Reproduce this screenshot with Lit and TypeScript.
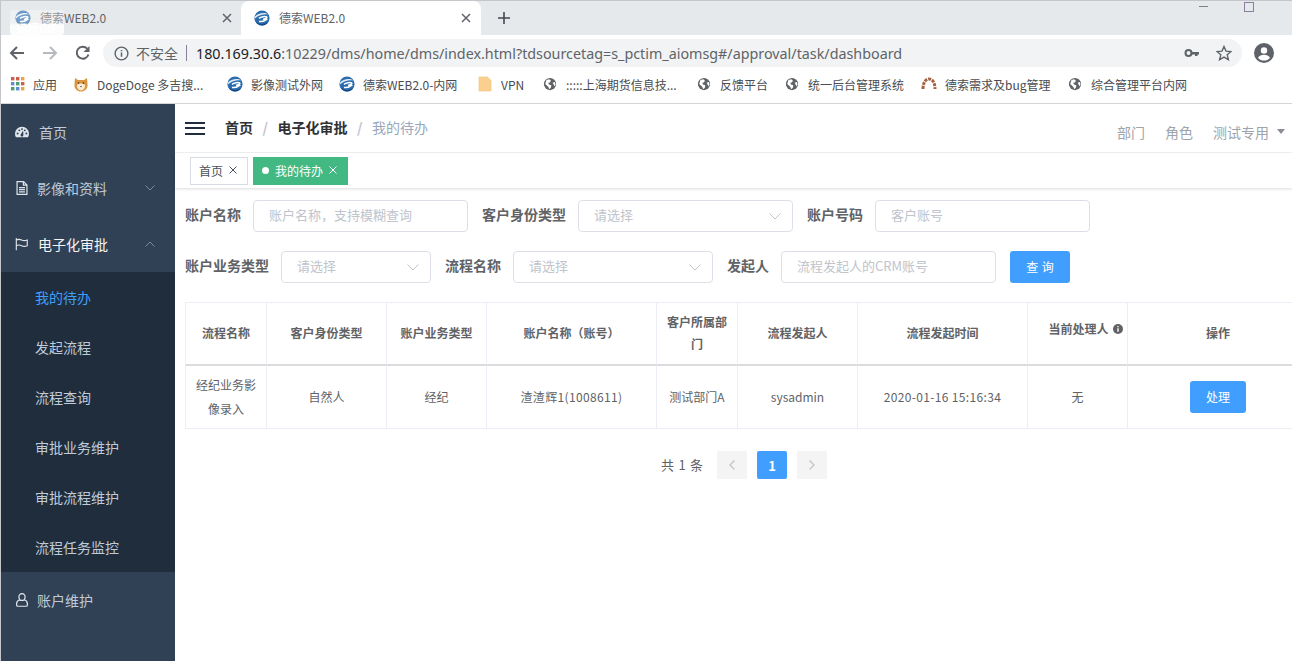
import { LitElement, html, css, svg } from "lit";
import { customElement } from "lit/decorators.js";

const favicon = html`<svg class="fav" viewBox="0 0 16 16">
  <circle cx="8" cy="8" r="7.6" fill="#2a6cae"></circle>
  <path d="M1 6.500C4 3 11 1.600 15 4.600 11 3.600 5 4.600 1 8.500z" fill="#dfeaf4"></path>
  <path d="M5 8.400c2-1.600 6-2.400 7.600-1.600.9.800-.6 2-3.600 2.600M5 11.400c2.400.4 6-.4 8.400-2.400" fill="none" stroke="#fff" stroke-width="1.500"></path>
  <path d="M1.400 11c3 3.600 9.600 4 13 .6-1 2.600-3.600 4-6.400 4-2.800 0-5.400-1.800-6.600-4.600z" fill="#124a85"></path>
</svg>`;

const globe = html`<svg class="fav small" viewBox="0 0 16 16">
  <circle cx="8" cy="8" r="7" fill="#5f6368"></circle>
  <path d="M4 3.500l3-.8 2 1.300-1 2.200-2 .3.800 2.200 2.700.8-.4 2.500-1.800 2-1.400-2.800-1.500-1.500-1.900-1.800zM11 6.500l2.600-.8.800 2.800-1.300 2.200-1-2z" fill="#fff"></path>
</svg>`;

const dog = html`<svg class="fav" viewBox="0 0 16 16">
  <path d="M2 2l3 2h6l3-2 .6 7c0 4-3 6.500-6.600 6.500S1.400 13 1.400 9z" fill="#d9963f"></path>
  <path d="M4 9c1-1 2.500-1.400 4-1.400s3 .4 4 1.400c.4 3-1.600 5.400-4 5.400S3.600 12 4 9z" fill="#f8ead4"></path>
  <circle cx="5.600" cy="7" r=".8" fill="#40281a"></circle>
  <circle cx="10.400" cy="7" r=".8" fill="#40281a"></circle>
  <path d="M7 10h2l-1 1.200z" fill="#40281a"></path>
</svg>`;

const apps = html`<svg class="fav apps" viewBox="0 0 14 14">
  ${[
    ["#c9604f", 0, 0], ["#c9604f", 5, 0], ["#e0a84a", 10, 0],
    ["#5f8fd0", 0, 5], ["#4e9f70", 5, 5], ["#c9604f", 10, 5],
    ["#4e9f70", 0, 10], ["#5f8fd0", 5, 10], ["#e0a84a", 10, 10],
  ].map(([c, x, y]) => svg`<rect x=${x} y=${y} width="3.400" height="3.400" fill=${c}></rect>`)}
</svg>`;

const folder = html`<svg class="fav" viewBox="0 0 16 16">
  <path d="M2 1h8.500L14 4.500V15H2z" fill="#fbd08e" stroke="#eec07a" stroke-width=".6"></path>
</svg>`;

const arc = html`<svg class="fav" viewBox="0 0 16 16">
  <path d="M2 13C2 6 5 3 8 3s6 3 6 10" fill="none" stroke="#a5623f" stroke-width="3" stroke-dasharray="3 1"></path>
</svg>`;

const bookmarks = [
  { icon: apps, text: "应用", w: 23 },
  { icon: dog, text: "DogeDoge 多吉搜...", w: 113 },
  { icon: favicon, text: "影像测试外网", w: 71 },
  { icon: favicon, text: "德索WEB2.0-内网", w: 97 },
  { icon: folder, text: "VPN", w: 24 },
  { icon: globe, text: ":::::上海期货信息技...", w: 113 },
  { icon: globe, text: "反馈平台", w: 47 },
  { icon: globe, text: "统一后台管理系统", w: 96 },
  { icon: arc, text: "德索需求及bug管理", w: 105 },
  { icon: globe, text: "综合管理平台内网", w: 96 },
];

const chevronDown = html`<svg class="chev" viewBox="0 0 10 6"><path d="M.5.500L5 5 9.500.5" fill="none" stroke="currentColor"></path></svg>`;
const chevronUp = html`<svg class="chev" viewBox="0 0 10 6"><path d="M.5 5.500L5 1l4.500 4.500" fill="none" stroke="currentColor"></path></svg>`;
const selectArrow = html`<svg class="arrow" viewBox="0 0 12 7"><path d="M.5.500L6 6 11.500.5" fill="none" stroke="#c0c4cc"></path></svg>`;

const dashIcon = html`<svg class="mi" viewBox="0 0 16 14"><path fill-rule="evenodd" d="M8 1a8 8 0 0 0-8 8c0 1.500.4 2.900 1.100 4h13.800A8 8 0 0 0 16 9a8 8 0 0 0-8-8zM3 9.800a1.100 1.100 0 1 1 0-2.200 1.100 1.100 0 0 1 0 2.200zm2-3.600a1.100 1.100 0 1 1 0-2.200 1.100 1.100 0 0 1 0 2.200zM8 4.800a1.100 1.100 0 1 1 0-2.200 1.100 1.100 0 0 1 0 2.200zm1.300 6.700a1.600 1.600 0 0 1-2.900-1.200c.2-.4 2.300-3.900 2.800-4.700.3.900 .5 5.100.1 5.900zM13 9.800a1.100 1.100 0 1 1 0-2.200 1.100 1.100 0 0 1 0 2.200zm-1.800-3.600a1.100 1.100 0 1 1 0-2.200 1.100 1.100 0 0 1 0 2.200z" fill="currentColor"></path></svg>`;
const fileIcon = html`<svg class="mi" viewBox="0 0 12 15"><path d="M.7.700h7l3.600 3.600v10h-10.600zM7.500.7v3.800h3.800M2.800 7h6.400M2.800 9.300h6.400M2.800 11.600h6.400" fill="none" stroke="currentColor" stroke-width="1.300"></path></svg>`;
const flagIcon = html`<svg class="mi" viewBox="0 0 16 14"><path d="M1.500 0v14M1.500 2.500c2-1.200 4-1 6 0s4 1 6.500 0v6.500c-2.500 1-4.500 1-6.500 0s-4-1.200-6 0" fill="none" stroke="currentColor" stroke-width="1.300"></path></svg>`;
const userIcon = html`<svg class="mi" viewBox="0 0 13 15"><path d="M6.500.7a3.300 3.300 0 0 1 3.300 3.500c0 2-1.300 3.800-3.300 3.800S3.200 6.200 3.200 4.200A3.300 3.300 0 0 1 6.500.7zM4 7.500c-2 .5-3.300 1.600-3.300 4v1.300c0 .8.500 1.400 1.300 1.400h9c.8 0 1.300-.6 1.300-1.400v-1.300c0-2.400-1.300-3.500-3.300-4" fill="none" stroke="currentColor" stroke-width="1.300"></path></svg>`;

const subMenu = ["我的待办", "发起流程", "流程查询", "审批业务维护", "审批流程维护", "流程任务监控"];

const columns = ["流程名称", "客户身份类型", "账户业务类型", "账户名称（账号）", "客户所属部门", "流程发起人", "流程发起时间", "当前处理人", "操作"];
const row = ["经纪业务影像录入", "自然人", "经纪", "渣渣辉1(1008611)", "测试部门A", "sysadmin", "2020-01-16 15:16:34", "无"];

@customElement("app-root")
export class AppRoot extends LitElement {
  static styles = css`
    * {
      box-sizing: border-box;
    }
    :host {
      display: flex;
      flex-direction: column;
      height: 661px;
      width: 1292px;
      position: relative;
      overflow: hidden;
      background: #fff;
      border: 1px solid #c4c6c9;
      font-family: "Noto Sans CJK SC", "Noto Sans", sans-serif;
    }
    .fav {
      width: 16px;
      height: 16px;
      flex: none;
    }
    .fav.small {
      width: 14px;
      height: 14px;
      margin: 0 1px;
    }
    .fav.apps {
      width: 14px;
      height: 14px;
    }

    /* browser chrome */
    .tabs {
      height: 34px;
      flex: none;
      background: #e6e9ec;
      display: flex;
      position: relative;
    }
    .tab {
      width: 240px;
      display: flex;
      align-items: center;
      padding: 0 8px 1px 14px;
      gap: 9px;
      font-size: 12px;
      color: #5f6368;
      height: 34px;
    }
    .tab.on {
      width: 240px;
      padding-left: 13px;
      background: #fff;
      border-radius: 8px 8px 0 0;
    }
    .tab .txt {
      flex: 1;
    }
    .tab .x {
      width: 10px;
      height: 10px;
      margin-right: 1px;
    }
    .tab.on .x {
      margin-right: 2px;
    }
    .plus {
      width: 12px;
      height: 12px;
      margin: 11px 0 0 17px;
    }
    .win {
      position: absolute;
      top: 5px;
      left: 1198px;
      width: 9px;
      height: 1px;
      background: #7d8084;
    }
    .win.max {
      top: 1px;
      left: 1243px;
      width: 10px;
      height: 10px;
      background: none;
      border: 1px solid #8b7f9c;
    }
    .gif {
      position: absolute;
      left: 9px;
      top: 9px;
      width: 54px;
      height: 25px;
      background: linear-gradient(rgba(255, 255, 255, 0.3), rgba(255, 255, 255, 0.35) 50%, rgba(255, 255, 255, 0.85) 62%);
      border-radius: 3px;
      color: #fff;
      font-size: 11px;
      font-weight: 700;
      text-align: center;
      padding-top: 11px;
      line-height: 15px;
    }

    .toolbar {
      height: 36px;
      flex: none;
      display: flex;
      align-items: center;
      background: #fff;
    }
    .nav {
      width: 16px;
      height: 16px;
      flex: none;
      margin-left: 8px;
    }
    .nav + .nav {
      margin-left: 17px;
    }
    .omni {
      margin-left: 12px;
      width: 1139px;
      height: 28px;
      border-radius: 14px;
      background: #f1f3f4;
      display: flex;
      align-items: center;
      padding-left: 11px;
      font-size: 14px;
      color: #5f6368;
    }
    .omni .info {
      width: 15px;
      height: 15px;
      flex: none;
    }
    .omni .warn {
      margin-left: 7px;
    }
    .omni .sep {
      width: 1px;
      height: 16px;
      background: #8a7f96;
      margin: 0 9px 0 8px;
      flex: none;
    }
    .omni .url {
      flex: 1;
      font-family: "Noto Sans", sans-serif;
      font-size: 14.32px;
      white-space: nowrap;
    }
    .omni .url b {
      font-weight: 400;
      color: #202124;
    }
    .omni .end {
      width: 16px;
      height: 16px;
      flex: none;
      margin-right: 10px;
      margin-left: 6px;
    }
    .avatar {
      width: 20px;
      height: 20px;
      flex: none;
      margin-left: 12px;
    }

    .bookmarks {
      height: 33px;
      flex: none;
      display: flex;
      align-items: center;
      gap: 17px;
      padding: 0 0 6px 10px;
      border-bottom: 1px solid #d3d5d8;
      font-size: 12px;
      color: #494c50;
    }
    .bm {
      display: flex;
      align-items: center;
      gap: 8px;
      white-space: nowrap;
    }
    .bm span {
      display: block;
    }

    /* app shell */
    .shell {
      flex: 1;
      display: flex;
      min-height: 0;
    }
    .side {
      width: 174px;
      flex: none;
      background: #304156;
      color: #bfcbd9;
      font-size: 14px;
    }
    .mi {
      width: 14px;
      height: 14px;
      flex: none;
      color: #dfe4ea;
    }
    .item {
      height: 56px;
      display: flex;
      align-items: center;
      padding: 0 20px 0 14px;
      gap: 8px;
    }
    .item.first {
      gap: 10px;
    }
    .item.open {
      color: #f4f4f5;
      gap: 9px;
    }
    .item .lbl {
      flex: 1;
    }
    .chev {
      width: 10px;
      height: 6px;
      color: #7c8a9b;
    }
    .sub {
      background: #1f2d3d;
    }
    .sub div {
      height: 50px;
      padding: 0 0 0 34px;
      display: flex;
      align-items: center;
    }
    .sub .on {
      color: #409eff;
    }

    .main {
      flex: 1;
      min-width: 0;
      display: flex;
      flex-direction: column;
    }
    .head {
      height: 49px;
      flex: none;
      display: flex;
      align-items: center;
      padding: 0 8px 0 10px;
      border-bottom: 1px solid #f2f3f5;
    }
    .ham {
      width: 20px;
      height: 13px;
      flex: none;
      border-top: 2px solid #1f2d3d;
      border-bottom: 2px solid #1f2d3d;
      position: relative;
    }
    .ham::after {
      content: "";
      position: absolute;
      left: 0;
      right: 0;
      top: 3.5px;
      height: 2px;
      background: #1f2d3d;
    }
    .crumb {
      margin: -2px 0 0 20px;
      font-size: 14px;
      font-weight: 700;
      color: #303133;
      display: flex;
      align-items: center;
      flex: 1;
    }
    .crumb i {
      font-style: normal;
      font-weight: 700;
      color: #c0c4cc;
      width: 24.5px;
      text-align: center;
    }
    .crumb em {
      font-style: normal;
      font-weight: 400;
      color: #97a8be;
    }
    .user {
      display: flex;
      align-items: center;
      gap: 20px;
      font-size: 14px;
      color: #9da4ac;
      margin-top: 7px;
    }
    .user .caret {
      width: 0;
      height: 0;
      border: 4.5px solid transparent;
      border-top: 5px solid #8b8d96;
      border-bottom: none;
      margin-left: -12px;
    }

    .tags {
      height: 35px;
      flex: none;
      display: flex;
      align-items: center;
      gap: 5px;
      padding: 0 0 0 15px;
      box-shadow: 0 1px 3px rgba(0, 0, 0, 0.14);
      font-size: 12px;
      color: #495060;
    }
    .tag {
      height: 28px;
      border: 1px solid #d8dce5;
      display: flex;
      align-items: center;
      padding: 0 10px 1px 8px;
      gap: 4px;
      white-space: nowrap;
    }
    .tag.on {
      background: #42b983;
      border-color: #42b983;
      color: #fff;
    }
    .tag .dot {
      width: 7px;
      height: 7px;
      border-radius: 50%;
      background: #fff;
      margin-right: 2px;
    }
    .tag svg {
      width: 8px;
      height: 8px;
      margin-left: 2px;
    }

    .body {
      flex: 1;
      padding: 12px 0 0 10px;
    }
    .form-row {
      display: flex;
      align-items: center;
      height: 32px;
      margin-bottom: 19px;
    }
    .form-row label {
      font-size: 14px;
      font-weight: 700;
      color: #606266;
      margin-right: 12px;
      padding-bottom: 4px;
      white-space: nowrap;
    }
    .field {
      height: 32px;
      flex: none;
      border: 1px solid #dcdfe6;
      border-radius: 4px;
      display: flex;
      align-items: center;
      padding: 0 15px;
      font-size: 13px;
      color: #c0c4cc;
      margin-right: 14px;
    }
    .field span {
      flex: 1;
      padding-bottom: 4px;
    }
    .arrow {
      width: 12px;
      height: 7px;
      margin-right: -4px;
    }
    .query {
      width: 60px;
      height: 32px;
      border: none;
      background: #409eff;
      color: #fff;
      border-radius: 3px;
      font: inherit;
      font-size: 12px;
      padding-bottom: 2px;
      word-spacing: 1px;
    }

    .table {
      display: grid;
      grid-template-columns: 81px 120px 100px 170px 81px 120px 170px 100px 180px;
      width: 1123px;
      border-left: 1px solid #ebeef5;
      margin-top: 18px;
      font-size: 12px;
      color: #606266;
    }
    .cell {
      display: flex;
      align-items: center;
      justify-content: center;
      text-align: center;
      padding: 0 9px;
      border-right: 1px solid #ebeef5;
      border-bottom: 1px solid #ebeef5;
    }
    .cell.last {
      border-right: none;
    }
    .th {
      height: 64px;
      font-weight: 700;
      line-height: 22px;
      padding-bottom: 2px;
      border-top: 1px solid #ebeef5;
      border-bottom: 2px solid #dcdcdc;
    }
    .th.warn {
      padding: 0 0 9px 16px;
      gap: 4px;
    }
    .th.warn svg {
      width: 10px;
      height: 10px;
    }
    .td {
      height: 63px;
      line-height: 24px;
    }
    .td.num {
      letter-spacing: 0.35px;
    }
    .do {
      width: 56px;
      height: 32px;
      border: none;
      background: #409eff;
      color: #fff;
      border-radius: 3px;
      font: inherit;
      font-size: 12px;
    }

    .pager {
      display: flex;
      justify-content: center;
      align-items: center;
      gap: 10px;
      width: 1118px;
      margin-top: 22px;
      font-size: 13px;
      color: #606266;
    }
    .pager .total {
      margin-right: 4px;
      margin-top: -2px;
      word-spacing: 1.5px;
    }
    .pg {
      width: 30px;
      height: 28px;
      background: #f4f4f5;
      border-radius: 2px;
      display: flex;
      align-items: center;
      justify-content: center;
      color: #c0c4cc;
    }
    .pg svg {
      width: 6px;
      height: 10px;
    }
    .pg.on {
      background: #409eff;
      color: #fff;
      font-weight: 700;
      font-size: 13px;
    }
  `;

  render() {
    return html`
      <div class="tabs">
        <div class="tab">
          ${favicon}<span class="txt">德索WEB2.0</span>
          <svg class="x" viewBox="0 0 10 10"><path d="M1 1l8 8M9 1l-8 8" stroke="#5f6368" stroke-width="1.500"></path></svg>
        </div>
        <div class="tab on">
          ${favicon}<span class="txt">德索WEB2.0</span>
          <svg class="x" viewBox="0 0 10 10"><path d="M1 1l8 8M9 1l-8 8" stroke="#5f6368" stroke-width="1.500"></path></svg>
        </div>
        <svg class="plus" viewBox="0 0 12 12"><path d="M6 0v12M0 6h12" stroke="#45484d" stroke-width="1.600"></path></svg>
        <div class="win"></div>
        <div class="win max"></div>
        <div class="gif">迅捷GIF</div>
      </div>

      <div class="toolbar">
        <svg class="nav" viewBox="0 0 16 16"><path d="M15 8H2M8 2L2 8l6 6" fill="none" stroke="#5f6368" stroke-width="2"></path></svg>
        <svg class="nav" viewBox="0 0 16 16"><path d="M1 8h13M8 2l6 6-6 6" fill="none" stroke="#b6babe" stroke-width="2"></path></svg>
        <svg class="nav" viewBox="0 0 16 16"><path d="M13.500 9.500A6 6 0 1 1 12.200 3.600" fill="none" stroke="#5f6368" stroke-width="2"></path><path d="M14.500 1v6h-6z" fill="#5f6368"></path></svg>
        <div class="omni">
          <svg class="info" viewBox="0 0 16 16"><circle cx="8" cy="8" r="6.800" fill="none" stroke="#5f6368" stroke-width="1.500"></circle><path d="M8 7v4.500M8 4.300v1.400" stroke="#5f6368" stroke-width="1.600"></path></svg>
          <span class="warn">不安全</span>
          <span class="sep"></span>
          <span class="url"><b>180.169.30.6</b>:10229/dms/home/dms/index.html?tdsourcetag=s_pctim_aiomsg#/approval/task/dashboard</span>
          <svg class="end" viewBox="0 0 16 16"><circle cx="4.500" cy="8" r="3" fill="none" stroke="#5f6368" stroke-width="2"></circle><path d="M7.500 7h7.500v2.500h-1.500v1.500H11V9.500H7.500z" fill="#5f6368"></path></svg>
          <svg class="end" viewBox="0 0 16 16"><path d="M8 1.500l2 4.600 5 .4-3.800 3.300 1.200 4.900L8 12.100l-4.400 2.600 1.200-4.900L1 6.500l5-.4z" fill="none" stroke="#5f6368" stroke-width="1.400"></path></svg>
        </div>
        <svg class="avatar" viewBox="0 0 20 20"><circle cx="10" cy="10" r="10" fill="#5f6368"></circle><circle cx="10" cy="7.500" r="3.200" fill="#fff"></circle><path d="M4 15c1-2.500 3.500-3.200 6-3.200s5 .7 6 3.200c-1.500 1.700-3.700 2.600-6 2.600s-4.500-.9-6-2.600z" fill="#fff"></path></svg>
      </div>

      <div class="bookmarks">
        ${bookmarks.map(
          (b) => html`<div class="bm">${b.icon}<span style="width:${b.w}px">${b.text}</span></div>`
        )}
      </div>

      <div class="shell">
        <nav class="side">
          <div class="item first">${dashIcon}<span class="lbl">首页</span></div>
          <div class="item">${fileIcon}<span class="lbl">影像和资料</span>${chevronDown}</div>
          <div class="item open">${flagIcon}<span class="lbl">电子化审批</span>${chevronUp}</div>
          <div class="sub">
            ${subMenu.map((s, i) => html`<div class=${i === 0 ? "on" : ""}>${s}</div>`)}
          </div>
          <div class="item">${userIcon}<span class="lbl">账户维护</span></div>
        </nav>

        <div class="main">
          <div class="head">
            <div class="ham"></div>
            <div class="crumb">
              首页<i>/</i>电子化审批<i>/</i><em>我的待办</em>
            </div>
            <div class="user">
              <span>部门</span><span>角色</span><span>测试专用</span><span class="caret"></span>
            </div>
          </div>

          <div class="tags">
            <div class="tag">
              首页<svg viewBox="0 0 8 8"><path d="M.5.500l7 7M7.500.5l-7 7" stroke="#495060"></path></svg>
            </div>
            <div class="tag on">
              <span class="dot"></span>我的待办<svg viewBox="0 0 8 8"><path d="M.5.500l7 7M7.500.5l-7 7" stroke="#fff"></path></svg>
            </div>
          </div>

          <div class="body">
            <div class="form-row">
              <label>账户名称</label>
              <div class="field" style="width:215px"><span>账户名称，支持模糊查询</span></div>
              <label>客户身份类型</label>
              <div class="field" style="width:215px"><span>请选择</span>${selectArrow}</div>
              <label>账户号码</label>
              <div class="field" style="width:215px"><span>客户账号</span></div>
            </div>
            <div class="form-row">
              <label>账户业务类型</label>
              <div class="field" style="width:150px"><span>请选择</span>${selectArrow}</div>
              <label>流程名称</label>
              <div class="field" style="width:200px"><span>请选择</span>${selectArrow}</div>
              <label>发起人</label>
              <div class="field" style="width:215px"><span>流程发起人的CRM账号</span></div>
              <button class="query">查 询</button>
            </div>

            <div class="table">
              ${columns.map((c, i) =>
                i === 7
                  ? html`<div class="cell th warn">
                      ${c}<svg viewBox="0 0 10 10"><circle cx="5" cy="5" r="5" fill="#606266"></circle><path d="M5 4.200v3.500M5 2v1.200" stroke="#fff" stroke-width="1.400"></path></svg>
                    </div>`
                  : html`<div class="cell th ${i === 8 ? "last" : ""}">${c}</div>`
              )}
              ${row.map((c, i) => html`<div class="cell td ${i === 3 || i === 6 ? "num" : ""}">${c}</div>`)}
              <div class="cell td last"><button class="do">处理</button></div>
            </div>

            <div class="pager">
              <span class="total">共 1 条</span>
              <div class="pg"><svg viewBox="0 0 6 10"><path d="M5.500.5L1 5l4.500 4.500" fill="none" stroke="#c0c4cc" stroke-width="1.300"></path></svg></div>
              <div class="pg on">1</div>
              <div class="pg"><svg viewBox="0 0 6 10"><path d="M.5.500L5 5 .5 9.500" fill="none" stroke="#c0c4cc" stroke-width="1.300"></path></svg></div>
            </div>
          </div>
        </div>
      </div>
    `;
  }
}
